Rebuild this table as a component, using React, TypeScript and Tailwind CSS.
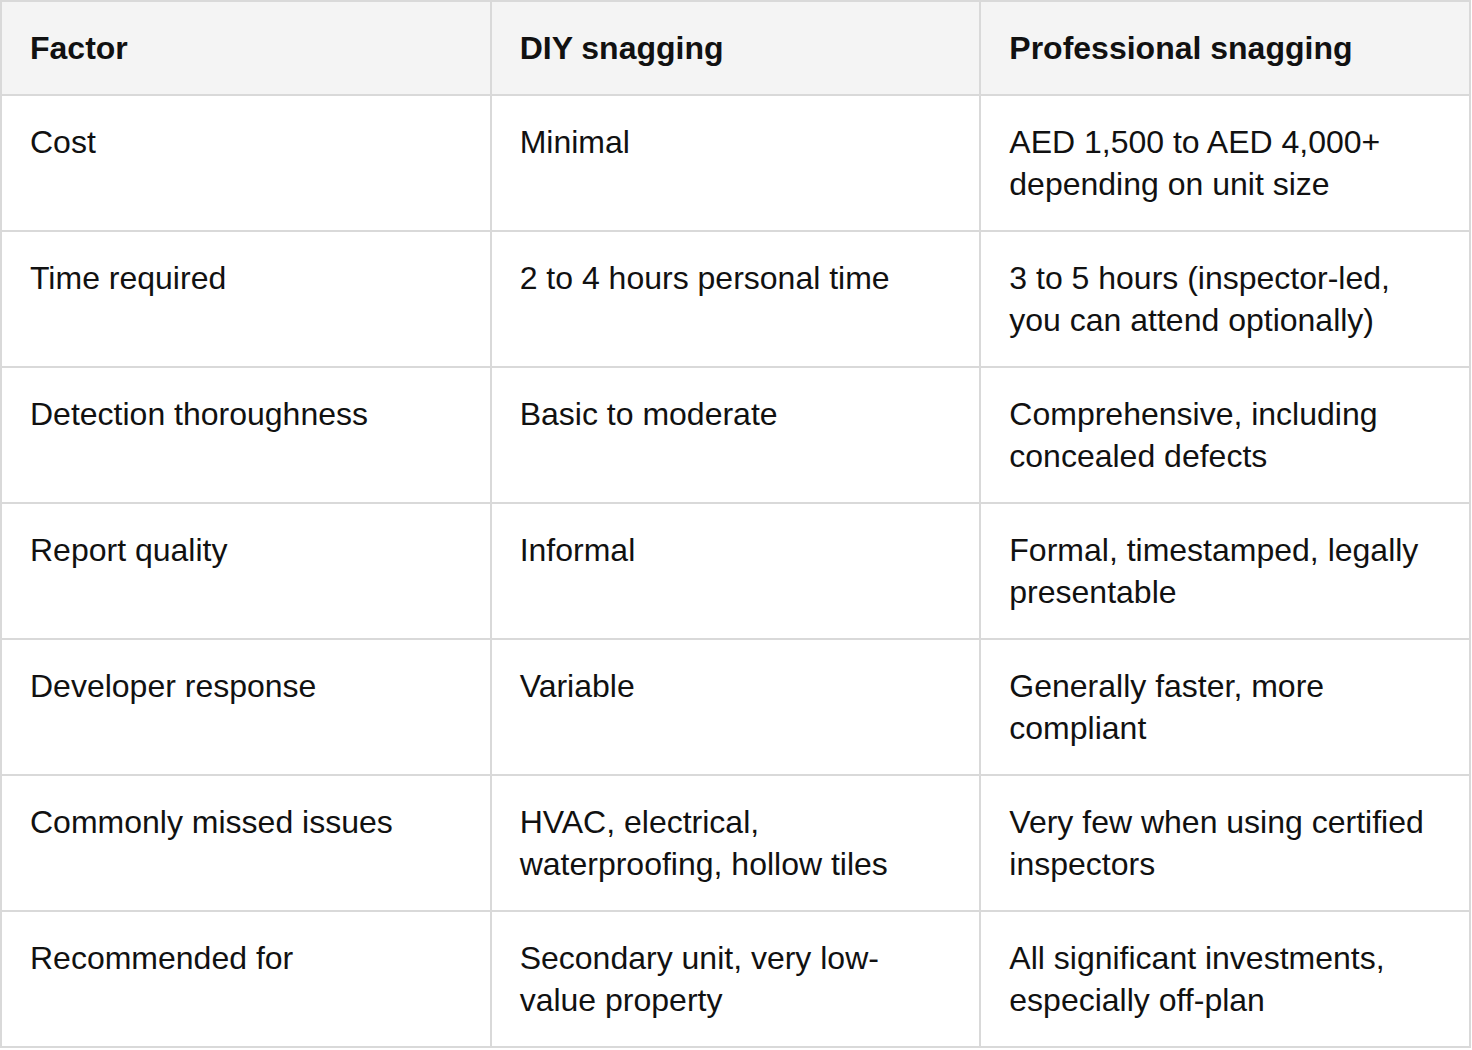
const rows = [
  ["Cost", "Minimal", "AED 1,500 to AED 4,000+ depending on unit size"],
  ["Time required", "2 to 4 hours personal time", "3 to 5 hours (inspector-led, you can attend optionally)"],
  ["Detection thoroughness", "Basic to moderate", "Comprehensive, including concealed defects"],
  ["Report quality", "Informal", "Formal, timestamped, legally presentable"],
  ["Developer response", "Variable", "Generally faster, more compliant"],
  ["Commonly missed issues", "HVAC, electrical, waterproofing, hollow tiles", "Very few when using certified inspectors"],
  ["Recommended for", "Secondary unit, very low-value property", "All significant investments, especially off-plan"],
];

const headers = ["Factor", "DIY snagging", "Professional snagging"];

export default function App() {
  return (
    <div className="bg-white min-h-screen" style={{ fontFamily: '"Liberation Sans", Arial, sans-serif' }}>
      <table className="w-[1471px] table-fixed border-collapse text-[32px] leading-[42px] text-[#111111]">
        <thead>
          <tr className="bg-[#f4f4f4]">
            {headers.map((h) => (
              <th
                key={h}
                className="border-2 border-[#d9d9d9] px-7 py-[25px] text-left align-top font-bold"
              >
                {h}
              </th>
            ))}
          </tr>
        </thead>
        <tbody>
          {rows.map((row) => (
            <tr key={row[0]}>
              {row.map((cell, i) => (
                <td key={i} className="border-2 border-[#d9d9d9] px-7 py-[25px] align-top">
                  {cell}
                </td>
              ))}
            </tr>
          ))}
        </tbody>
      </table>
    </div>
  );
}
